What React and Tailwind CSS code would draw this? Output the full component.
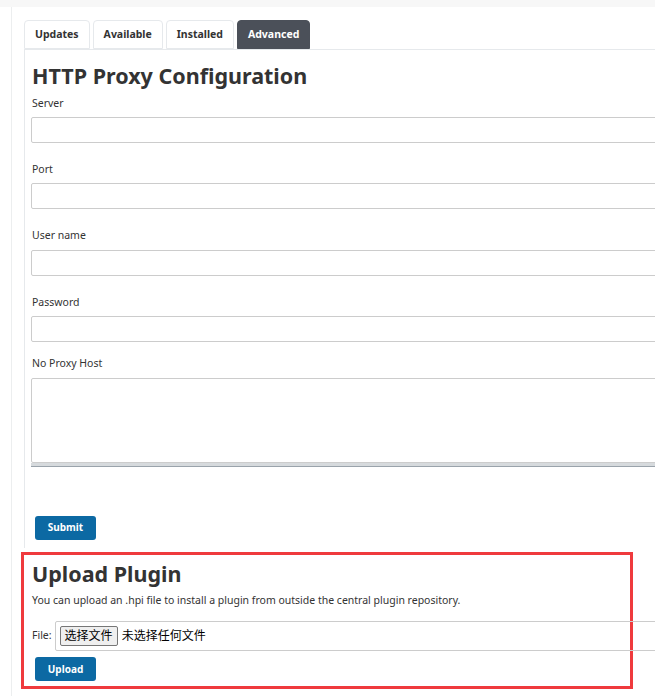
import React from "react";

const fields = [
    { label: "Server", gap: "mt-[5px]", inputGap: "mt-[7px]" },
    { label: "Port", gap: "mt-[19px]", inputGap: "mt-[7px]" },
    { label: "User name", gap: "mt-[19px]", inputGap: "mt-[8px]" },
    { label: "Password", gap: "mt-[19px]", inputGap: "mt-[7px]" },
];

function Tab({ label, active }) {
    return (
        <div
            className={
                "h-[29px] px-[10px] flex items-center rounded-t-[4px] border text-[10.5px] font-bold " +
                (active ? "bg-[#4b5059] border-[#4b5059] text-white" : "bg-white border-[#e6e9ec] text-[#333]")
            }
        >
            {label}
        </div>
    );
}

function BlueButton({ children }) {
    return (
        <button className="w-[61px] h-[24px] rounded-[3px] bg-[#0c69a3] text-white text-[10px] font-bold">
            {children}
        </button>
    );
}

export default function App() {
    return (
        <div
            className="w-[655px] h-[696px] overflow-hidden bg-white text-[#333]"
            style={{ fontFamily: '"Noto Sans", "Noto Sans CJK SC", sans-serif' }}
        >
            {/* Top band */}
            <div className="h-[7px] bg-[#f7f7f7]" />

            <div className="flex h-[689px]">
                <div className="w-[11px] shrink-0" />
                <div className="flex-1 border-l border-[#eceeef] pl-[12px] pt-[13px] min-w-0">

                    {/* Tabs */}
                    <div className="flex gap-[3px]">
                        <Tab label="Updates" />
                        <Tab label="Available" />
                        <Tab label="Installed" />
                        <Tab label="Advanced" active />
                    </div>

                    {/* Proxy panel */}
                    <div className="border-t border-l border-[#e6e9ec] pl-[6px] pt-[11px] pb-[8px] w-[800px]">
                        <h1 className="text-[21.5px] font-bold leading-[30px] ml-[1px]">HTTP Proxy Configuration</h1>

                        {fields.map((f) => (
                            <div key={f.label} className={f.gap}>
                                <div className="text-[10.5px] leading-[14px] ml-[1px]">{f.label}</div>
                                <input className={f.inputGap + " block w-[700px] h-[26px] border border-[#cccccc] rounded-[2px] bg-white"} />
                            </div>
                        ))}

                        <div className="mt-[14px]">
                            <div className="text-[10.5px] leading-[14px] ml-[1px]">No Proxy Host</div>
                            <textarea className="mt-[8px] block w-[700px] h-[85px] border border-[#cccccc] rounded-[2px] bg-white resize-none" />
                            <div className="w-[700px] h-[4px] bg-[#d6dadd] border-b border-[#9aa3ab]" />
                        </div>

                        <div className="mt-[46px] ml-[4px]">
                            <BlueButton>Submit</BlueButton>
                        </div>
                    </div>

                    {/* Upload plugin (highlighted) */}
                    <div className="mt-[4px] ml-[-3px] w-[612px] h-[137px] border-[3px] border-[#ef3a3d] pl-[8px] pt-[4px]">
                        <h2 className="text-[21.5px] font-bold leading-[30px]">Upload Plugin</h2>
                        <p className="mt-[4px] text-[10.5px] leading-[14px]">
                            You can upload an .hpi file to install a plugin from outside the central plugin repository.
                        </p>
                        <div className="mt-[14px] flex items-center">
                            <span className="text-[10.5px] mr-[3px]">File:</span>
                            <div className="w-[620px] shrink-0 h-[30px] border border-[#cccccc] rounded-[2px] flex items-center pl-[4px] text-[12px]">
                                <span className="h-[20px] px-[4px] flex items-center bg-[#efefef] border border-[#767676] rounded-[2px] text-black">
                                    选择文件
                                </span>
                                <span className="ml-[4px] text-black">未选择任何文件</span>
                            </div>
                        </div>
                        <div className="mt-[4px] ml-[3px]">
                            <BlueButton>Upload</BlueButton>
                        </div>
                    </div>

                </div>
            </div>
        </div>
    );
}
